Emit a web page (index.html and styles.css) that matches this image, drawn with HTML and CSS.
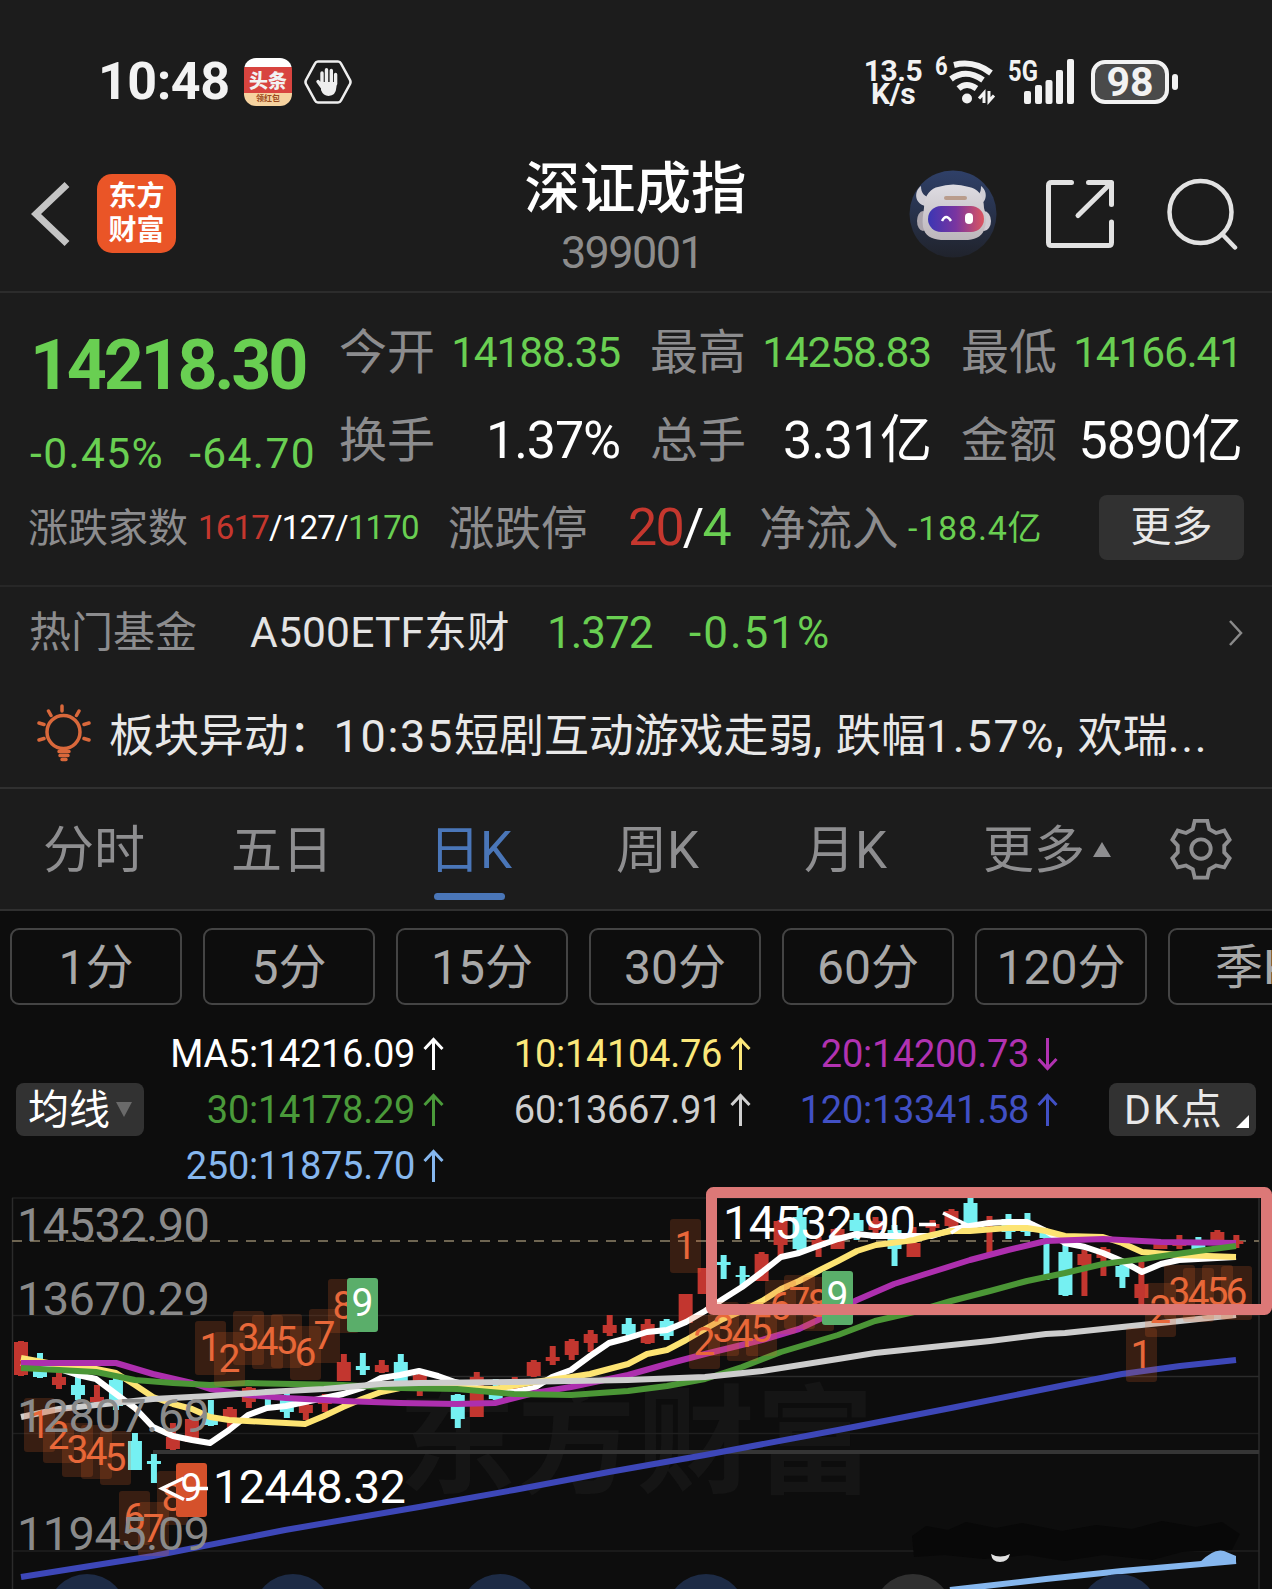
FILE: index.html
```html
<!DOCTYPE html>
<html lang="zh-CN">
<head>
    <meta charset="UTF-8">
    <meta name="viewport" content="width=device-width, initial-scale=1.0">
    <title>深证成指 399001</title>
    <link rel="stylesheet" href="styles.css">
</head>
<body>

    <div class="status-bar">
        <span class="clock">10:48</span>
        <div class="toutiao"><b>头条</b><small>领红包</small></div>
        <svg class="hex" width="48" height="44" viewBox="0 0 48 44">
            <path d="M14 1.5h20q2 0 3 2l9 16.500q1 2 0 4L37 40.500q-1 2-3 2H14q-2 0-3-2L2 24q-1-2 0-4L11 3.500q1-2 3-2z" fill="none" stroke="#eee" stroke-width="2.600"/>
            <g stroke="#eee" stroke-width="3.400" stroke-linecap="round" fill="#eee">
                <path d="M18 24V13M22.500 22V9.800M27.300 22V10.500M31.600 24V14.500M18 27l-4-5.500" fill="none"/>
                <path d="M18 23h13.500v3.500q-.5 8.500-7 8.500-4.500 0-6.500-5z" stroke-width="2"/>
            </g>
        </svg>
        <div class="status-right">
            <div class="speed"><span>13.5</span><span>K/s</span></div>
            <span class="wifi-gen">6</span>
            <svg class="wifi" width="48" height="46" viewBox="0 0 48 46" fill="none" stroke="#f2f2f2">
                <path d="M6 6q20-5 37 8" stroke-width="6"/>
                <path d="M3 20q15-11 32 1" stroke-width="6"/>
                <path d="M10.500 29.500q8-7 18 0" stroke-width="6"/>
                <circle cx="19" cy="39.500" r="5" fill="#f2f2f2" stroke="none"/>
                <path d="M36 44V34l-5 5.500M41 32v10l5-5.500" stroke-width="3"/>
            </svg>
            <div class="cell">
                <span>5G</span>
                <svg width="52" height="46" viewBox="0 0 52 46" fill="#f2f2f2">
                    <rect x="0" y="32" width="7" height="13" rx="2"/>
                    <rect x="11" y="26" width="7" height="19" rx="2"/>
                    <rect x="21.500" y="21" width="7" height="24" rx="2"/>
                    <rect x="32" y="11" width="7" height="34" rx="2"/>
                    <rect x="43" y="0" width="7" height="45" rx="2"/>
                </svg>
            </div>
            <div class="battery">98</div>
            <i class="battery-tip"></i>
        </div>
    </div>

    <div class="header">
        <div class="header-left">
            <svg width="40" height="66" viewBox="0 0 40 66"><path d="M36 3.500L5 33l31 29.500" fill="none" stroke="#c4c4c4" stroke-width="7"/></svg>
            <div class="logo"><span>东方</span><span>财富</span></div>
        </div>
        <div class="title">
            <h1>深证成指</h1>
            <span>399001</span>
        </div>
        <div class="header-right">
            <svg width="88" height="88" viewBox="0 0 88 88">
                <defs>
                    <linearGradient id="sky" x1="0" y1="0" x2="0" y2="1"><stop offset="0" stop-color="#2f4068"/><stop offset="1" stop-color="#20232c"/></linearGradient>
                    <linearGradient id="visor"><stop offset="0" stop-color="#3b36b4"/><stop offset=".5" stop-color="#7a35a0"/><stop offset="1" stop-color="#dc5560"/></linearGradient>
                    <linearGradient id="shell" x1="0" y1="0" x2="0" y2="1"><stop offset="0" stop-color="#dedce2"/><stop offset="1" stop-color="#bcb6bb"/></linearGradient>
                </defs>
                <circle cx="44" cy="44" r="43.500" fill="url(#sky)"/>
                <path d="M12 16c-7 5-7 17 4 20l7-8c-8-1-11-5-11-12zM72 16c7 5 7 17-4 20l-6-8c8-1 10-5 10-12z" fill="#d0ced6"/>
                <ellipse cx="14" cy="51" rx="6" ry="10" fill="#aaa4ac"/>
                <ellipse cx="75" cy="51" rx="7" ry="10" fill="#d0cbd2"/>
                <path d="M15 38c0-14 8-20 14-21q15-5 31 0c8 1 15 8 15 21 2 7 3 12 1 19-2 9-8 12-17 13H32c-10-1-16-4-18-13-1-7 0-12 1-19z" fill="url(#shell)"/>
                <rect x="19" y="36" width="56" height="26" rx="13" fill="url(#visor)"/>
                <rect x="35" y="26" width="23" height="4" rx="2" fill="#b99c8c"/>
                <path d="M33 51q4-8 9 0" fill="none" stroke="#fff" stroke-width="2.500"/>
                <rect x="56" y="43" width="8" height="11" rx="4" fill="#fff"/>
            </svg>
            <svg class="share" width="70" height="70" viewBox="0 0 70 70" fill="none" stroke="#e2e2e2" stroke-width="5" stroke-linecap="round" stroke-linejoin="round">
                <path d="M26.500 3.500H6.500q-3 0-3 3v57q0 3 3 3h57q3 0 3-3V43M43.500 3.500h23v22M66 4L33 36.500"/>
            </svg>
            <svg class="search" width="72" height="72" viewBox="0 0 72 72" fill="none" stroke="#e2e2e2" stroke-width="4.500" stroke-linecap="round">
                <circle cx="34.500" cy="34" r="31"/><path d="M56 56l13 13.500"/>
            </svg>
        </div>
    </div>

    <div class="quote">
        <div class="quote-main">
            <div class="price">
                <div class="last">14218.30</div>
                <div class="change"><span>-0.45%</span><span>-64.70</span></div>
            </div>
            <div class="stats">
                <div><label>今开</label><span class="down">14188.35</span></div>
                <div><label>最高</label><span class="down">14258.83</span></div>
                <div><label>最低</label><span class="down">14166.41</span></div>
                <div><label>换手</label><span class="big">1.37%</span></div>
                <div><label>总手</label><span class="big">3.31亿</span></div>
                <div><label>金额</label><span class="big">5890亿</span></div>
            </div>
        </div>
        <div class="quote-more">
            <label class="l1">涨跌家数</label>
            <span class="v1"><i class="up">1617</i>/127/<i class="down">1170</i></span>
            <label class="l2">涨跌停</label>
            <span class="v2"><i class="up">20</i>/<i class="down">4</i></span>
            <label class="l3">净流入</label>
            <span class="v3 down">-188.4亿</span>
            <button class="more-btn">更多</button>
        </div>
    </div>

    <div class="fund">
        <span class="fund-label">热门基金</span>
        <span class="fund-name">A500ETF东财</span>
        <span class="fund-price down">1.372</span>
        <span class="fund-change down">-0.51%</span>
        <svg width="16" height="28" viewBox="0 0 16 28"><path d="M2 2l11 12L2 26" fill="none" stroke="#8a8a8a" stroke-width="2.500"/></svg>
    </div>

    <div class="news">
        <svg width="56" height="58" viewBox="0 0 56 58" fill="none" stroke="#d9683b" stroke-width="3.500" stroke-linecap="round">
            <circle cx="26.500" cy="28" r="16.500"/>
            <path d="M25 2v5M11.500 7l2.500 4.500M42 7l-2.500 4.500M2 19l5 1.500M52 19l-5 1.500M2 36l5-1.500M52 36l-5-1.500M22 47.500h10M23 51.500h8M25 55.500h4"/>
        </svg>
        <p>板块异动：<b>10:35</b>短剧互动游戏走弱<em>,</em>跌幅<b>1.57%</b><em>,</em>欢瑞<b>...</b></p>
    </div>

    <div class="tabs">
        <span>分时</span>
        <span>五日</span>
        <span class="active">日K</span>
        <span>周K</span>
        <span>月K</span>
        <span class="tab-more">更多<i></i></span>
        <svg width="62" height="62" viewBox="0 0 64 64" fill="none" stroke="#8e8e90" stroke-width="4">
            <path d="M25.500 3h13l2 8.500 7 4 8.500-2.500L61.500 22.500l-5.500 6v7l5.500 6L56 51l-8.500-2-7 4-2 8.500h-13l-2-8.500-7-4L8 51l-5.500-9.500 5.500-6v-7l-5.500-6L8 13l8.500 2.500 7-4z"/>
            <circle cx="32" cy="32" r="10"/>
        </svg>
    </div>

    <div class="periods">
        <span>1分</span>
        <span>5分</span>
        <span>15分</span>
        <span>30分</span>
        <span>60分</span>
        <span>120分</span>
        <span>季K</span>
    </div>

    <div class="ma">
        <button class="ma-btn">均线<i></i></button>
        <div class="ma-list" id="maList"></div>
        <button class="dk-btn">DK点<i></i></button>
    </div>

    <svg id="chart" class="chart" width="1272" height="399" viewBox="0 1190 1272 399"></svg>

    <script>
        // --- Moving average legend ---
        const maList = document.getElementById('maList');
        const averages = [
            ['MA5:14216.09', '#ffffff', 1], ['10:14104.76', '#fbe77a', 1], ['20:14200.73', '#b132b1', 0],
            ['30:14178.29', '#4a9a3a', 1], ['60:13667.91', '#cfcfcf', 1], ['120:13341.58', '#4150c4', 1],
            ['250:11875.70', '#86b7ee', 1]
        ];
        averages.forEach(([text, color, up]) => {
            const arrow = up ? 'M10.500 33V2.500M1.500 12l9-9.500 9 9.500' : 'M10.500 1v30.500M1.500 22l9 9.500 9-9.500';
            maList.innerHTML += `<div style="color:${color}"><span>${text}</span><svg width="21" height="34" viewBox="0 0 21 34"><path d="${arrow}" fill="none" stroke="currentColor" stroke-width="3"/></svg></div>`;
        });

        // --- Chart ---
        const RED = '#c2362f', CYAN = '#75f0f2';
        const STEP = 18.99, X0 = 21;

        // color, wick top, wick bottom, body top, body bottom
        const candles = [
            ['r',1341,1376,1342,1375],['c',1353,1378,1360,1377],['r',1370,1389,1377,1385],['c',1376,1400,1385,1395],['r',1385,1404,1397,1402],
            ['c',1378,1410,1380,1406],['c',1433,1470,1441,1470],['c',1454,1483,1461,1464],['r',1423,1450,1437,1449],['r',1418,1442,1419,1442],
            ['c',1400,1426,1416,1425],['r',1407,1428,1409,1419],['r',1387,1408,1388,1402],['c',1389,1408,1390,1399],['c',1391,1418,1399,1412],
            ['r',1402,1420,1405,1413],['r',1394,1412,1396,1404],['r',1354,1381,1362,1381],['c',1353,1375,1366,1370],['r',1360,1373,1365,1372],
            ['c',1354,1385,1362,1382],['r',1372,1396,1375,1385],['r',1380,1390,1381,1385],['c',1394,1428,1395,1419],['r',1372,1417,1377,1417],
            ['c',1379,1400,1394,1399],['r',1377,1392,1386,1391],['r',1360,1377,1362,1376],['r',1346,1365,1357,1361],['r',1339,1360,1341,1355],
            ['r',1330,1352,1334,1343],['r',1315,1336,1325,1333],['c',1318,1337,1324,1334],['r',1319,1344,1324,1343],['c',1319,1340,1321,1336],
            ['r',1294,1323,1294,1323],['r',1268,1294,1268,1294],['c',1255,1279,1262,1265],['c',1266,1285,1275,1277],['r',1252,1281,1254,1281],
            ['r',1220,1256,1221,1245],['c',1208,1253,1217,1249],['r',1237,1257,1240,1247],['r',1228,1249,1229,1249],['c',1213,1240,1220,1231],
            ['r',1217,1235,1221,1230],['c',1225,1266,1230,1249],['r',1227,1257,1243,1257],['r',1220,1234,1224,1228],['r',1209,1228,1211,1226],
            ['c',1198,1227,1203,1226],['r',1216,1256,1221,1224],['c',1214,1239,1219,1232],['c',1213,1236,1222,1232],['c',1233,1280,1233,1238],
            ['c',1243,1296,1252,1295],['r',1250,1296,1254,1265],['r',1247,1276,1249,1258],['c',1262,1288,1266,1277],['r',1262,1304,1284,1298],
            ['r',1240,1249,1243,1249],['r',1235,1249,1241,1246],['c',1237,1249,1244,1249],['r',1230,1243,1232,1242],['r',1235,1248,1241,1244]
        ];

        const lines = [
            ['#ffffff', '21,1363 59,1369 78,1375 96,1379 116,1394 135,1408 153,1427 173,1436 192,1440 210,1443 229,1430 248,1415 267,1408 286,1406 305,1402 324,1398 343,1394 362,1388 381,1378 400,1375 419,1371 438,1376 455,1382 477,1388 495,1391 514,1392 534,1388 552,1377 571,1370 590,1356 609,1343 628,1338 647,1332 667,1330 686,1322 705,1311 723,1299 742,1287 762,1272 781,1257 799,1253 818,1246 838,1239 857,1234 876,1236 914,1236 932,1236 951,1230 970,1226 989,1223 1008,1222 1027,1222 1046,1231 1065,1243 1085,1247 1103,1253 1122,1261 1142,1272 1161,1264 1179,1260 1198,1259 1236,1257'],
            ['#fde473', '21,1358 59,1365 96,1369 116,1373 135,1385 153,1397 173,1404 192,1409 210,1417 229,1420 267,1422 305,1424 324,1416 343,1407 362,1399 381,1392 400,1388 457,1388 495,1389 534,1382 571,1377 590,1374 628,1364 647,1354 667,1350 686,1340 705,1329 723,1319 742,1311 762,1301 781,1289 799,1281 818,1271 838,1261 857,1251 876,1245 914,1240 932,1235 951,1231 970,1231 1008,1228 1027,1228 1046,1231 1065,1236 1103,1237 1122,1243 1142,1252 1179,1255 1236,1257'],
            ['#ad2fae', '21,1363 78,1363 116,1363 153,1374 192,1383 210,1389 248,1395 286,1398 343,1401 400,1403 457,1404 495,1403 534,1393 571,1387 628,1375 667,1364 705,1354 762,1340 799,1329 818,1320 857,1300 894,1284 932,1272 970,1260 1008,1250 1046,1241 1103,1239 1161,1242 1236,1243'],
            ['#4b9636', '21,1368 59,1370 96,1372 135,1380 173,1383 210,1385 248,1383 343,1385 400,1388 457,1389 514,1394 571,1395 628,1391 667,1386 705,1379 742,1367 781,1352 838,1335 875,1321 914,1312 951,1301 990,1291 1027,1281 1065,1273 1103,1264 1142,1259 1198,1251 1236,1246'],
            ['#cdcdcd', '21,1417 59,1409 96,1405 153,1399 210,1396 267,1392 324,1389 381,1384 419,1383 514,1382 628,1380 705,1377 762,1371 838,1359 875,1353 932,1347 990,1341 1046,1334 1065,1333 1122,1327 1180,1321 1236,1315'],
            ['#3d47b8', '21,1577 153,1556 285,1530 419,1507 514,1490 609,1472 705,1455 838,1430 951,1408 1065,1385 1122,1374 1180,1366 1236,1360'],
            ['#86b7ee', '950,1590 1046,1579 1122,1571 1236,1561']
        ];

        // digit, left edge of its box, vertical center
        const marks = [
            [1,24,1425],[2,43,1436],[3,62,1450],[4,81,1452],[5,100,1458],[6,119,1518],[7,138,1529],[8,157,1498],
            [1,195,1348],[2,214,1359],[3,233,1338],[4,252,1342],[5,271,1341],[6,290,1353],[7,309,1336],[8,328,1306],
            [1,670,1246],[2,689,1342],[3,708,1329],[4,727,1334],[5,746,1329],[6,765,1307],[7,784,1302],[8,803,1304],
            [1,1126,1355],[2,1145,1310],[3,1164,1292],[4,1183,1295],[5,1202,1292],[6,1221,1293]
        ];

        let svg = '<text class="watermark" x="398" y="1484" textLength="476">东方财富</text>';

        // grid
        [1198, 1315.5, 1433.5, 1551].forEach(y => {
            svg += `<path d="M12 ${y}H1259" stroke="#1f1f1f" stroke-width="1.500"/>`;
        });
        svg += '<path d="M400 1376.500H1259M12.500 1198V1589M1259 1198V1589" stroke="#2b2b2b" stroke-width="1.500" fill="none"/>';
        svg += '<path d="M153 1452H1259" stroke="#353535" stroke-width="4"/>';
        svg += '<path d="M12 1241H1259" stroke="#6e6552" stroke-width="1.800" stroke-dasharray="10 8"/>';

        candles.forEach(([c, wt, wb, bt, bb], i) => {
            const x = X0 + i * STEP;
            const fill = c === 'r' ? RED : CYAN;
            svg += `<rect x="${x - 3}" y="${wt}" width="6" height="${wb - wt}" fill="${fill}"/>`;
            svg += `<rect x="${x - 7}" y="${bt}" width="14" height="${bb - bt}" fill="${fill}"/>`;
        });

        lines.forEach(([color, points]) => {
            svg += `<polyline points="${points}" fill="none" stroke="${color}" stroke-width="6" stroke-linejoin="round"/>`;
        });

        marks.forEach(([n, x, y]) => {
            svg += `<rect x="${x}" y="${y - 27}" width="31" height="54" rx="3" class="mark-bg"/>`;
            svg += `<text x="${x + 15.5}" y="${y + 13}" class="mark">${n}</text>`;
        });
        [[176, 1463, '#d5512b'], [347, 1278, '#5aae6a'], [822, 1271, '#5aae6a']].forEach(([x, y, color]) => {
            svg += `<rect x="${x}" y="${y}" width="31" height="54" rx="3" fill="${color}"/>`;
            svg += `<text x="${x + 15.5}" y="${y + 38}" class="mark nine">9</text>`;
        });

        // price axis
        [['14532.90', 1241], ['13670.29', 1315], ['12807.69', 1432], ['11945.09', 1550]].forEach(([text, y]) => {
            svg += `<text x="17" y="${y}" textLength="193" class="axis">${text}</text>`;
        });

        // high / low labels
        svg += '<text x="723" y="1239" textLength="193" class="peak">14532.90</text>';
        svg += '<path d="M919 1224.500h17M943 1213l22 11-14 9" fill="none" stroke="#fff" stroke-width="3.500"/>';
        svg += '<text x="213" y="1503" textLength="193" class="peak">12448.32</text>';
        svg += '<path d="M184 1478l-22 10.500 22 11M186 1488.500h22" fill="none" stroke="#fff" stroke-width="3.500"/>';

        // highlighted range
        svg += '<rect x="711.500" y="1192.500" width="555" height="117" rx="2" fill="none" stroke="#dc7877" stroke-width="11" stroke-linejoin="round"/>';

        // dark smudge above the 250 day line
        svg += '<path d="M912 1536l14-10 22 4 18-8 30 6 26-5 40 8 34-6 36 4 30-8 34 6 26-5 18 12-8 16-50 2-30 8-48-5-40 6-36-6-44 4-40-4-30 2z" fill="#080808"/>';
        svg += '<path d="M991 1554q9 5 19 0-2 8-10 8t-9-8z" fill="#e0e0e0"/>';
        svg += '<path d="M1200 1562q14-14 24-11l12 5v8z" fill="#86b7ee"/>';

        // floating toolbar, only its top edge is on screen
        [87, 293, 500, 706, 913, 1119].forEach(x => {
            svg += `<circle cx="${x}" cy="1613.500" r="39.500" fill="${x === 913 ? '#303030' : '#1d2b45'}"/>`;
        });

        document.getElementById('chart').innerHTML = svg;
    </script>

</body>
</html>
```
FILE: styles.css
```css
* {
    box-sizing: border-box;
}
body {
    margin: 0;
    width: 1272px;
    height: 1589px;
    overflow: hidden;
    background-color: #1c1c1c;
    color: #fff;
    font-family: Roboto, "Noto Sans CJK SC", sans-serif;
    white-space: nowrap;
}
i, em {
    font-style: normal;
}
svg {
    display: block;
    flex-shrink: 0;
}
button {
    border: none;
    padding: 0;
    color: inherit;
    font-family: inherit;
}
.up {
    color: #c5372e;
}
.down {
    color: #69cf52;
}

/* status bar */
.status-bar {
    display: flex;
    align-items: center;
    height: 163px;
    padding-left: 98px;
    color: #f2f2f2;
    font-weight: 700;
}
.clock {
    width: 146px;
    font-size: 52px;
    letter-spacing: -0.5px;
}
.toutiao {
    display: flex;
    flex-direction: column;
    align-items: center;
    width: 48px;
    height: 48px;
    margin-right: 12px;
    border-radius: 12px;
    overflow: hidden;
    background: linear-gradient(#fff 9px, #d8443f 9px, #d8443f 35px, #f6d3a0 35px);
}
.toutiao b {
    margin-top: 11px;
    font-size: 19px;
    line-height: 25px;
}
.toutiao small {
    color: #9b4a1c;
    font-size: 8px;
    line-height: 10px;
}
.status-right {
    display: flex;
    align-items: center;
    margin-left: auto;
    padding-right: 94px;
}
.speed {
    display: flex;
    flex-direction: column;
    align-items: center;
    width: 62px;
    font-size: 30px;
    line-height: 23px;
    letter-spacing: -0.5px;
}
.wifi-gen {
    width: 13px;
    margin: -30px 0 0 11px;
    font-size: 26px;
    line-height: 27px;
    transform: scaleX(0.85);
    transform-origin: left;
}
.wifi {
    margin-right: 12px;
}
.cell {
    position: relative;
    width: 67px;
    padding-left: 16px;
}
.cell span {
    position: absolute;
    left: 0;
    top: 0;
    font-size: 29px;
    line-height: 24px;
    transform: scaleX(0.82);
    transform-origin: left;
}
.battery {
    width: 78px;
    height: 44px;
    margin-left: 16px;
    border: 4px solid #f2f2f2;
    border-radius: 14px;
    background-color: #4a4a4a;
    font-size: 41px;
    line-height: 37px;
    text-align: center;
}
.battery-tip {
    width: 6px;
    height: 16px;
    margin-left: 3px;
    border-radius: 3px;
    background-color: #f2f2f2;
}

/* title bar */
.header {
    display: grid;
    grid-template-columns: 1fr auto 1fr;
    align-items: center;
    height: 130px;
    padding: 0 34px 27px 31px;
    border-bottom: 2px solid #2c2c2c;
}
.header-left,
.header-right {
    display: flex;
    align-items: center;
}
.header-right {
    justify-content: flex-end;
}
.logo {
    display: flex;
    flex-direction: column;
    align-items: center;
    width: 79px;
    height: 79px;
    margin-left: 26px;
    padding-top: 6px;
    border-radius: 15px;
    background-color: #ea5527;
    font-size: 28px;
    font-weight: 700;
    line-height: 34px;
}
.title {
    display: flex;
    flex-direction: column;
    align-items: center;
    margin: -9px 0 -15px 2px;
}
.title h1 {
    margin: 0 0 13px;
    font-size: 55.5px;
    font-weight: 500;
    line-height: 60px;
}
.title span {
    margin-right: 7px;
    color: #8c8c8c;
    font-size: 45px;
    line-height: 40px;
    letter-spacing: -1.6px;
}
.share {
    margin-left: 48px;
}
.search {
    margin-left: 51px;
}

/* quote */
.quote {
    height: 294px;
    border-bottom: 2px solid #272727;
}
.quote label {
    color: #8c8c8e;
}
.quote-main {
    display: flex;
    height: 192px;
    padding: 15px 30px 0 30px;
}
.price {
    width: 310px;
    color: #69cf52;
}
.last {
    margin-top: 16px;
    font-size: 70px;
    font-weight: 700;
    line-height: 82px;
    letter-spacing: -3.3px;
}
.change {
    display: flex;
    gap: 25px;
    margin-top: 23px;
    font-size: 42.5px;
    line-height: 50px;
    letter-spacing: 1.4px;
}
.stats {
    display: grid;
    grid-template-columns: 281px 281px 281px;
    grid-auto-rows: 88px;
    column-gap: 30px;
    align-items: center;
    margin-top: 1px;
}
.stats div {
    display: flex;
    align-items: center;
    justify-content: space-between;
}
.stats label {
    font-size: 48px;
    line-height: 60px;
}
.stats span {
    font-size: 42.5px;
    line-height: 60px;
    letter-spacing: -1.2px;
}
.stats .big {
    font-size: 52px;
    letter-spacing: -1.1px;
}
.quote-more {
    display: flex;
    align-items: center;
    height: 84px;
    padding-left: 28px;
    line-height: 60px;
}
.quote-more label {
    padding-top: 3px;
}
.quote-more span {
    padding-top: 1px;
}
.quote-more .l1 {
    width: 170px;
    font-size: 40px;
}
.quote-more .l2,
.quote-more .l3 {
    font-size: 46.5px;
}
.quote-more .v1 {
    width: 250px;
    font-size: 33px;
    letter-spacing: -0.8px;
}
.quote-more .l2 {
    width: 180px;
}
.quote-more .v2 {
    width: 131px;
    font-size: 52px;
    letter-spacing: -1.8px;
}
.quote-more .l3 {
    width: 149px;
}
.quote-more .v3 {
    width: 191px;
    font-size: 34px;
    letter-spacing: 0.8px;
}
.more-btn {
    width: 145px;
    height: 65px;
    border-radius: 8px;
    background-color: #313131;
    color: #e8e8e8;
    font-size: 41px;
    line-height: 60px;
}

/* hot fund */
.fund {
    display: flex;
    align-items: center;
    height: 92px;
    padding: 0 28px 0 29px;
    font-size: 44px;
    line-height: 60px;
}
.fund-label {
    width: 221px;
    color: #8c8c8e;
    font-size: 42px;
}
.fund-name {
    width: 297px;
    margin-top: -1px;
    color: #e4e4e4;
    font-size: 42.5px;
    letter-spacing: 0.2px;
}
.fund-price {
    width: 142px;
    letter-spacing: -1px;
}
.fund-change {
    letter-spacing: 2px;
}
.fund svg {
    margin-left: auto;
}

/* news ticker */
.news {
    display: flex;
    align-items: center;
    height: 110px;
    padding: 0 0 0 37px;
    border-bottom: 2px solid #303030;
    color: #e8e8e8;
    font-size: 45px;
}
.news p {
    margin: -2px 0 0 16px;
    letter-spacing: -0.1px;
}
.news b {
    font-weight: 400;
    letter-spacing: 1.7px;
}
.news em {
    margin-right: 14px;
}

/* chart tabs */
.tabs {
    display: flex;
    align-items: center;
    height: 122px;
    padding-left: 43px;
    border-bottom: 2px solid #303030;
    color: #8e8e90;
    font-size: 51px;
    line-height: 74px;
}
.tabs span {
    position: relative;
    width: 188px;
    margin-top: 3px;
}
.tabs .active {
    width: 187px;
    margin-left: 10px;
    color: #4a76b8;
}
.tabs .active::after {
    content: "";
    position: absolute;
    left: 5px;
    bottom: -12px;
    width: 71px;
    height: 7px;
    border-radius: 4px;
    background-color: #4a76b8;
}
.tabs .tab-more {
    display: flex;
    align-items: center;
    width: 187px;
    margin-left: -9px;
}
.tab-more i {
    margin: -2px 0 0 8px;
    border: 9px solid transparent;
    border-top: none;
    border-bottom: 15px solid #8e8e90;
}

/* period buttons */
.periods {
    display: flex;
    gap: 21px;
    height: 112px;
    padding: 17px 0 0 10px;
    background-color: #0d0d0d;
    overflow: hidden;
}
.periods span {
    flex: 0 0 172px;
    height: 77px;
    border: 2px solid #444;
    border-radius: 9px;
    color: #a8a8a8;
    font-size: 48px;
    line-height: 76px;
    text-align: center;
}

/* moving averages */
.ma {
    display: flex;
    align-items: center;
    height: 167px;
    padding: 0 16px;
    background-color: #0d0d0d;
}
.ma-btn,
.dk-btn {
    position: relative;
    display: flex;
    align-items: center;
    height: 53px;
    margin-top: 6px;
    border-radius: 8px;
    background-color: #323232;
    font-size: 41px;
    line-height: 52px;
}
.ma-btn {
    width: 128px;
    padding-left: 12px;
}
.ma-btn i {
    margin-left: 6px;
    border: 8px solid transparent;
    border-bottom: none;
    border-top: 15px solid #6a6a6a;
}
.ma-list {
    display: grid;
    grid-template-columns: 300px 307px 307px;
    grid-auto-rows: 56px;
    width: 914px;
    margin-top: 7px;
    font-size: 38px;
    letter-spacing: -0.3px;
}
.ma-list div {
    display: flex;
    align-items: center;
    justify-content: flex-end;
    gap: 8px;
}
.dk-btn {
    width: 147px;
    margin-left: auto;
    padding-left: 15px;
    color: #e8e8e8;
    letter-spacing: 2px;
}
.dk-btn i {
    position: absolute;
    right: 7px;
    bottom: 8px;
    border-left: 13px solid transparent;
    border-bottom: 13px solid #fff;
}

/* chart */
.chart {
    overflow: visible;
    background-color: #0d0d0d;
}
.watermark {
    fill: #151515;
    font: 700 118px "Noto Sans CJK SC", sans-serif;
}
.axis {
    fill: #8a8a8a;
    font-size: 47px;
}
.peak {
    fill: #fff;
    font-size: 47px;
}
.mark {
    fill: #e8683a;
    font-size: 39px;
    text-anchor: middle;
}
.mark-bg {
    fill: #e8642a;
    fill-opacity: 0.2;
}
.nine {
    fill: #fff;
}
```
